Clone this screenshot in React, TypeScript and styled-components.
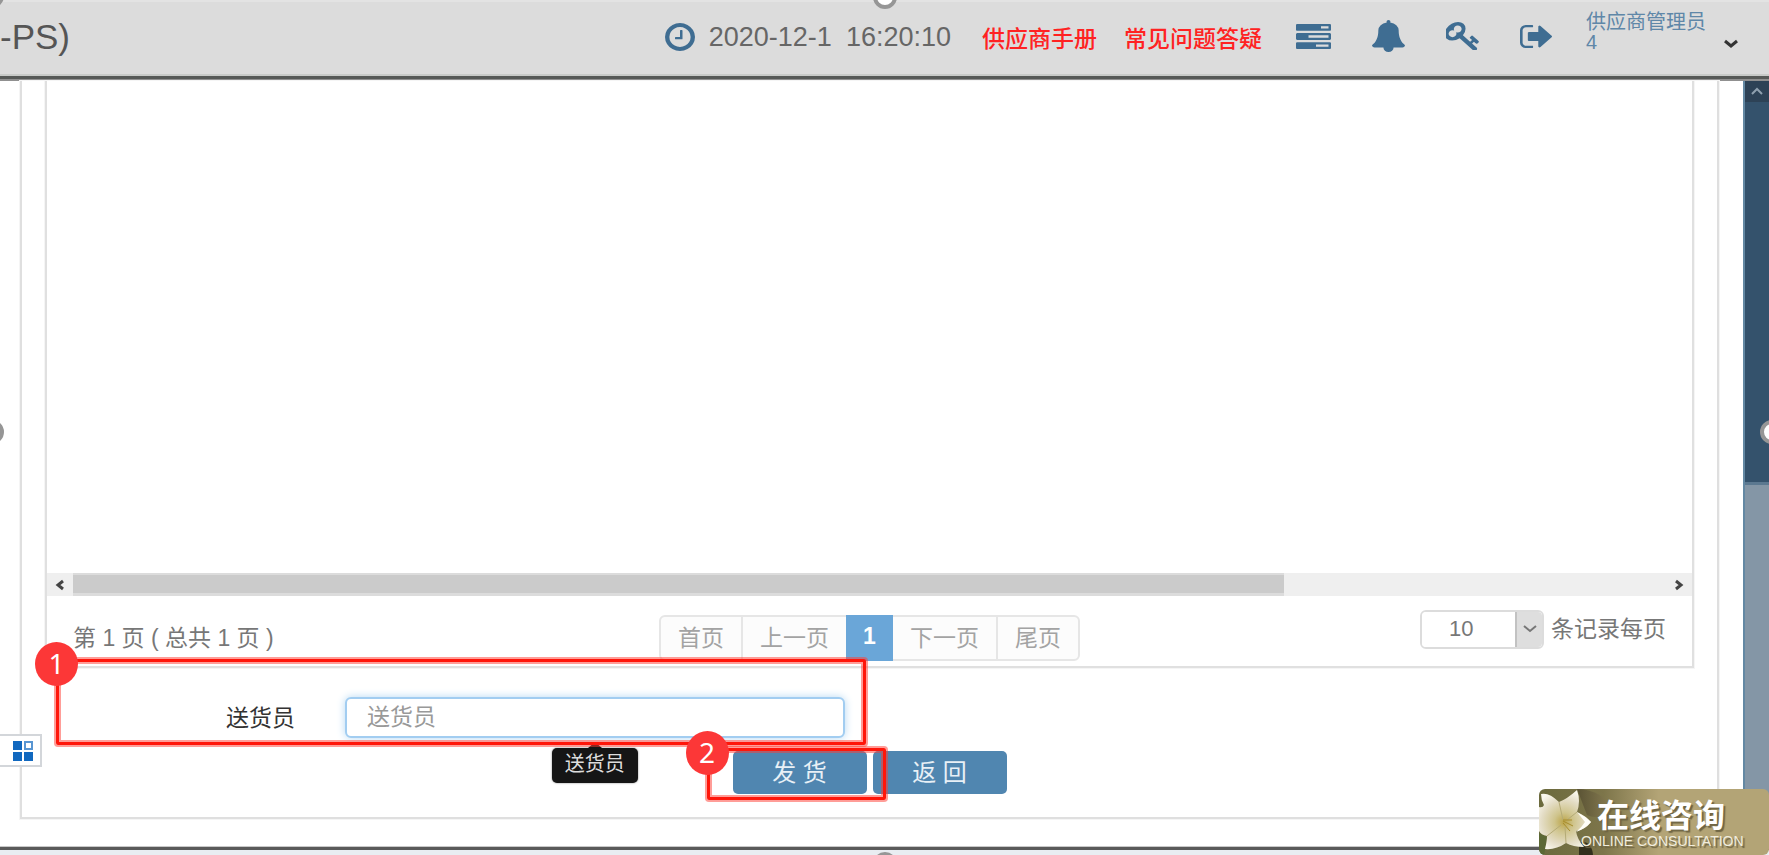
import React from 'react';
import styled, { createGlobalStyle } from 'styled-components';

const GlobalStyle = createGlobalStyle`
  *, *::before, *::after { box-sizing: border-box; }
  body {
    margin: 0;
    background: #fff;
    color: #666;
    font-family: "Liberation Sans", "Noto Sans CJK SC", sans-serif;
    font-size: 23px;
    overflow: hidden;
  }
  button, input, select { font: inherit; }
`;

const blue = '#3f6d92';

const Page = styled.div`
  position: relative;
  display: flex;
  flex-direction: column;
  min-height: 100vh;
  overflow: hidden;
`;

const Header = styled.header`
  display: flex;
  align-items: center;
  height: 81px;
  padding: 0 31px 7px 0;
  background: #dcdcdc;
  box-shadow: inset 0 2px #e3e3e3, inset 0 -2px #909090, inset 0 -5px #565957, inset 0 -7px #c8cac8;
`;

const Title = styled.h1`
  margin: 0;
  font-size: 35px;
  font-weight: 400;
  line-height: 40px;
  color: #555;
`;

const Tools = styled.nav`
  display: flex;
  align-items: center;
  margin-left: auto;
`;

const Clock = styled.time`
  display: flex;
  align-items: center;
  gap: 14px;
  margin-right: 31px;
  font-size: 27px;
  line-height: 32px;
`;

const HelpLinks = styled.div`
  display: flex;
  gap: 27px;
  margin: 4px 34px 0 0;
`;

const HelpLink = styled.a`
  color: #f22;
  font-weight: 500;
  line-height: 32px;
  text-decoration: none;
`;

const IconButton = styled.button<{ $gap: number }>`
  display: flex;
  margin: 0 ${p => p.$gap}px 2px 0;
  padding: 0;
  border: 0;
  background: none;
  color: ${blue};
`;

const UserMenu = styled.button`
  display: flex;
  align-items: flex-end;
  gap: 18px;
  margin: 0 0 10px;
  padding: 0;
  border: 0;
  background: none;
  color: #5f87a8;
  font-size: 20px;
  line-height: 20px;
  text-align: left;
`;

const UserName = styled.span`
  width: 120px;
`;

const Caret = styled.span`
  color: #333;
`;

const Body = styled.div`
  display: flex;
  flex: 1;
`;

const Frame = styled.main`
  display: flex;
  flex: 1;
  flex-direction: column;
  min-width: 0;
  margin: 0 24px 28px 20px;
  padding: 0 23px 23px;
  border: 2px solid #dfdfdf;
  border-top: 0;
  box-shadow: 0 0 0 1px #f5f5f5;
`;

const Grid = styled.section`
  display: flex;
  flex: 1;
  flex-direction: column;
  border: 2px solid #e0e0e0;
  border-top: 0;
  box-shadow: 0 0 0 1px #f5f5f5;
`;

const Rows = styled.div`
  flex: 1;
`;

const HScroll = styled.div`
  display: flex;
  height: 23px;
  background: #efefef;
`;

const HScrollButton = styled.button`
  display: flex;
  align-items: center;
  justify-content: center;
  width: 26px;
  padding: 0;
  border: 0;
  background: none;
  color: #444;
`;

const HScrollTrack = styled.div`
  flex: 1;
`;

const HScrollThumb = styled.div`
  width: 76%;
  height: 100%;
  background: #cbcbcb;
  border: solid #dcdcdc;
  border-width: 2px 0 3px;
`;

const Pager = styled.div`
  display: grid;
  grid-template-columns: 1fr auto 1fr;
  align-items: center;
  height: 70px;
  padding: 0 26px;
`;

const PageInfo = styled.span`
  padding-top: 14px;
  line-height: 30px;
  color: #777;
`;

const PageList = styled.div`
  display: flex;
  margin-top: 13px;
  height: 46px;
  border: 2px solid #e6e6e6;
  border-radius: 6px;
  background: #fcfcfc;
`;

const PageButton = styled.button<{ $active?: boolean }>`
  margin: ${p => (p.$active ? '-2px 0' : '0')};
  padding: 0 17px 3px;
  border: 0;
  background: ${p => (p.$active ? '#6aa6d8' : 'none')};
  color: ${p => (p.$active ? '#fff' : '#a3a3a3')};
  font-weight: ${p => (p.$active ? 700 : 400)};

  & + &:not(:nth-child(3)):not(:nth-child(4)) {
    border-left: 2px solid #e6e6e6;
  }
`;

const PageSize = styled.label`
  display: flex;
  align-items: center;
  justify-self: end;
  gap: 7px;
  line-height: 30px;
  color: #777;
  padding-bottom: 4px;
`;

const SelectBox = styled.span`
  display: grid;
  width: 124px;
  height: 39px;
  overflow: hidden;
  border: 2px solid #dcdcdc;
  border-radius: 6px;
  grid-template-columns: 1fr 27px;
`;

const Select = styled.select`
  grid-column: 1 / 3;
  grid-row: 1;
  appearance: none;
  padding: 0 0 0 27px;
  border: 0;
  background: #fff;
  color: #777;
  font-size: 22px;
`;

const SelectArrow = styled.span`
  grid-column: 2;
  grid-row: 1;
  display: flex;
  align-items: center;
  justify-content: center;
  margin: -2px -2px -2px 0;
  border: 2px solid #c2c2c2;
  background: #dedede;
  color: #777;
  pointer-events: none;
`;

const Field = styled.div`
  position: relative;
  display: flex;
  align-items: center;
  width: 50%;
  padding: 29px 25px 0 0;
`;

const FieldLabel = styled.label`
  width: 250px;
  margin-right: 50px;
  color: #333;
  line-height: 32px;
  text-align: right;
`;

const InputBox = styled.div`
  position: relative;
  flex: 1;
`;

const Input = styled.input`
  display: block;
  width: 100%;
  height: 41px;
  padding: 0 20px 1px;
  border: 2px solid #a2cdf1;
  border-radius: 6px;
  outline: 0;
  box-shadow: 0 0 8px #b5d8f3;
  color: #555;

  &::placeholder { color: #999; opacity: 1; }
`;

const Tooltip = styled.div`
  position: absolute;
  top: 51px;
  left: 50%;
  padding: 1px 13px 4px;
  border-radius: 5px;
  background: #151515;
  box-shadow: 0 0 2px #777;
  color: #ddd;
  font-size: 20px;
  line-height: 30px;
  white-space: nowrap;
  transform: translateX(-50%);

  &::before {
    content: '';
    position: absolute;
    top: -6px;
    left: 50%;
    margin-left: -7px;
    border: solid transparent;
    border-width: 0 7px 6px;
    border-bottom-color: #151515;
  }
`;

const Highlight = styled.div<{ $inset: string }>`
  position: absolute;
  inset: ${p => p.$inset};
  z-index: 2;
  border: 3px solid #ff160a;
  border-radius: 2px;
  box-shadow: 0 0 0 2px rgba(255, 60, 50, 0.5), inset 0 0 0 2px rgba(255, 60, 50, 0.5);
  pointer-events: none;
`;

const Step = styled.span`
  position: absolute;
  top: -20px;
  left: -24px;
  width: 43px;
  height: 44px;
  border-radius: 50%;
  background: #fc3737;
  color: #fff;
  font-family: "Noto Sans", sans-serif;
  font-size: 28px;
  line-height: 43px;
  text-align: center;
`;

const Actions = styled.div`
  display: flex;
  justify-content: center;
  gap: 6px;
  margin-top: 13px;
`;

const ActionSlot = styled.div`
  position: relative;
`;

const ActionButton = styled.button`
  width: 134px;
  height: 43px;
  padding: 0 0 4px;
  border: 0;
  border-radius: 5px;
  background: #5086b0;
  color: #e8f0f6;
  font-size: 24px;
`;

const VScroll = styled.div`
  display: flex;
  flex-direction: column;
  width: 26px;
  border-left: 2px solid #6388a3;
  background: #8496a6;
`;

const VScrollButton = styled.button`
  display: flex;
  align-items: center;
  justify-content: center;
  height: 21px;
  padding: 0;
  border: 0;
  background: #2d4256;
  color: #8fa0af;
`;

const VScrollThumb = styled.div`
  height: 50%;
  border-bottom: 3px solid #5b7890;
  background: #34526c;
`;

const BottomBar = styled.footer`
  height: 8px;
  border-top: 3px solid #5a5a5a;
  background: #e9edf2;
  box-shadow: 0 -1px #c8c8c8;
`;

const SideTab = styled.button`
  position: absolute;
  bottom: 88px;
  left: -2px;
  display: flex;
  align-items: center;
  width: 44px;
  height: 33px;
  padding: 0 0 0 13px;
  border: 2px solid #d3d6da;
  background: #fff;
  color: #1168bf;
`;

const Consult = styled.a`
  position: absolute;
  right: 0;
  bottom: 0;
  width: 230px;
  height: 66px;
  overflow: hidden;
  border-radius: 6px;
  background: linear-gradient(90deg, #6b6a3d 0, #7d754a 28%, #b3a476 52%);
  color: #fff;
  text-decoration: none;
  text-shadow: 2px 2px 1px #6f6544;
`;

const Flower = styled.svg`
  position: absolute;
  top: 0;
  left: 0;
`;

const ConsultText = styled.span`
  position: relative;
  display: flex;
  flex-direction: column;
  padding: 10px 0 0 42px;
  white-space: nowrap;
  color: #fff;
`;

const ConsultTitle = styled.strong`
  padding-left: 16px;
  font-size: 32px;
  font-weight: 700;
  line-height: 34px;
`;

const ConsultSub = styled.span`
  font-size: 14px;
  line-height: 16px;
  color: #f0ecdd;
`;

const Handle = styled.i<{ $x: string; $y: string }>`
  position: absolute;
  z-index: 3;
  left: ${p => p.$x};
  top: ${p => p.$y};
  width: 24px;
  height: 24px;
  margin: -12px 0 0 -12px;
  border: 4px solid #969696;
  border-radius: 50%;
  background: #fff;
`;

const paths = {
  clock: 'M1024 544v448q0 14-9 23t-23 9h-320q-14 0-23-9t-9-23v-64q0-14 9-23t23-9h224v-352q0-14 9-23t23-9h64q14 0 23 9t9 23zm416 352q0-148-73-273t-198-198-273-73-273 73-198 198-73 273 73 273 198 198 273 73 273-73 198-198 73-273zm224 0q0 209-103 385.5t-279.5 279.5-385.5 103-385.5-103-279.5-279.5-103-385.5 103-385.5 279.5-279.5 385.5-103 385.5 103 279.5 279.5 103 385.5z',
  tasks: 'M1024 1408h640v-128h-640v128zm-384-512h1024v-128h-1024v128zm640-512h384v-128h-384v128zm512 832v256q0 26-19 45t-45 19h-1664q-26 0-45-19t-19-45v-256q0-26 19-45t45-19h1664q26 0 45 19t19 45zm0-512v256q0 26-19 45t-45 19h-1664q-26 0-45-19t-19-45v-256q0-26 19-45t45-19h1664q26 0 45 19t19 45zm0-512v256q0 26-19 45t-45 19h-1664q-26 0-45-19t-19-45v-256q0-26 19-45t45-19h1664q26 0 45 19t19 45z',
  bell: 'M1728 1408q0 52-38 90t-90 38h-448q0 106-75 181t-181 75-181-75-75-181h-448q-52 0-90-38t-38-90q50-42 91-88t85-119.5 74.5-158.5 50-206 19.5-260q0-152 117-282.5t307-158.5q-8-19-8-39 0-40 28-68t68-28 68 28 28 68q0 20-8 39 190 28 307 158.5t117 282.5q0 139 19.5 260t50 206 74.5 158.5 85 119.5 91 88z',
  key: 'M832 512q0-80-56-136t-136-56-136 56-56 136q0 42 19 83-41-19-83-19-80 0-136 56t-56 136 56 136 136 56 136-56 56-136q0-42-19-83 41 19 83 19 80 0 136-56t56-136zm851 704q0 17-49 66t-66 49q-9 0-28.5-16t-36.5-33-38.5-40-24.5-26l-96 96 220 220q28 28 28 68 0 42-39 81t-81 39q-40 0-68-28l-671-671q-176 131-365 131-163 0-265.5-102.5t-102.5-265.5q0-160 95-313t248-248 313-95q163 0 265.5 102.5t102.5 265.5q0 189-131 365l355 355 96-96q-3-3-26-24.5t-40-38.5-33-36.5-16-28.5q0-17 49-66t66-49q13 0 23 10 6 6 46 44.5t82 79.5 86.5 86 73 78 28.5 41z',
  signOut: 'M704 1440q0 4 1 20t.5 26.5-3 23.5-10 19.5-20.5 6.5h-320q-119 0-203.5-84.5t-84.5-203.5v-704q0-119 84.5-203.5t203.5-84.5h320q13 0 22.5 9.5t9.5 22.5q0 4 1 20t.5 26.5-3 23.5-10 19.5-20.5 6.5h-320q-66 0-113 47t-47 113v704q0 66 47 113t113 47h312l11.5 1 11.5 3 8 5.5 7 9 2 13.5zm928-544q0 26-19 45l-544 544q-19 19-45 19t-45-19-19-45v-288h-448q-26 0-45-19t-19-45v-384q0-26 19-45t45-19h448v-288q0-26 19-45t45-19 45 19l544 544q19 19 19 45z',
};

type GlyphProps = { d: string; box: string; w: number; h: number; color?: string };

const Glyph = ({ d, box, w, h, color = 'currentColor' }: GlyphProps) => (
  <svg width={w} height={h} viewBox={box} preserveAspectRatio="none" fill={color} aria-hidden="true">
    <path d={d} />
  </svg>
);

const Chevron = ({ d, w, h, stroke = 3 }: { d: string; w: number; h: number; stroke?: number }) => (
  <svg width={w} height={h} viewBox={`0 0 ${w} ${h}`} fill="none" stroke="currentColor" strokeWidth={stroke} aria-hidden="true">
    <path d={d} />
  </svg>
);

export default function App() {
  return (
    <>
      <GlobalStyle />
      <Page>
        <Header>
          <Title>-PS)</Title>
          <Tools>
            <Clock>
              <Glyph d={paths.clock} box="128 128 1536 1536" w={30} h={28} color={blue} />
              <span>2020-12-1</span>
              <span>16:20:10</span>
            </Clock>
            <HelpLinks>
              <HelpLink href="#manual">供应商手册</HelpLink>
              <HelpLink href="#faq">常见问题答疑</HelpLink>
            </HelpLinks>
            <IconButton $gap={41} aria-label="任务">
              <Glyph d={paths.tasks} box="0 128 1792 1408" w={35} h={25} />
            </IconButton>
            <IconButton $gap={41} aria-label="通知">
              <Glyph d={paths.bell} box="64 0 1664 1792" w={33} h={32} />
            </IconButton>
            <IconButton $gap={41} aria-label="密码">
              <Glyph d={paths.key} box="64 128 1620 1540" w={33} h={28} />
            </IconButton>
            <IconButton $gap={34} aria-label="退出">
              <Glyph d={paths.signOut} box="64 256 1568 1280" w={32} h={23} />
            </IconButton>
            <UserMenu>
              <UserName>供应商管理员<br />4</UserName>
              <Caret>
                <Chevron d="M1 2L7 7L13 2" w={14} h={10} />
              </Caret>
            </UserMenu>
          </Tools>
        </Header>

        <Body>
          <Frame>
            <Grid>
              <Rows />
              <HScroll>
                <HScrollButton aria-label="向左滚动"><Chevron d="M8 2L3 6L8 10" w={10} h={12} /></HScrollButton>
                <HScrollTrack><HScrollThumb /></HScrollTrack>
                <HScrollButton aria-label="向右滚动"><Chevron d="M2 2L7 6L2 10" w={10} h={12} /></HScrollButton>
              </HScroll>
              <Pager>
                <PageInfo>第 1 页 ( 总共 1 页 )</PageInfo>
                <PageList>
                  <PageButton>首页</PageButton>
                  <PageButton>上一页</PageButton>
                  <PageButton $active>1</PageButton>
                  <PageButton>下一页</PageButton>
                  <PageButton>尾页</PageButton>
                </PageList>
                <PageSize>
                  <SelectBox>
                    <Select defaultValue="10">
                      <option>10</option>
                      <option>20</option>
                      <option>50</option>
                    </Select>
                    <SelectArrow><Chevron d="M1 2L7 7L13 2" w={14} h={10} stroke={2} /></SelectArrow>
                  </SelectBox>
                  条记录每页
                </PageSize>
              </Pager>
            </Grid>

            <Field>
              <FieldLabel htmlFor="courier">送货员</FieldLabel>
              <InputBox>
                <Input id="courier" placeholder="送货员" />
                <Tooltip role="tooltip">送货员</Tooltip>
              </InputBox>
              <Highlight $inset="-9px 4px -7px 11px"><Step>1</Step></Highlight>
            </Field>

            <Actions>
              <ActionSlot>
                <ActionButton>发 货</ActionButton>
                <Highlight $inset="-3px -19px -6px -26px"><Step>2</Step></Highlight>
              </ActionSlot>
              <ActionButton>返 回</ActionButton>
            </Actions>
          </Frame>

          <VScroll>
            <VScrollButton aria-label="向上滚动"><Chevron d="M1 7L6 2L11 7" w={12} h={9} stroke={2} /></VScrollButton>
            <VScrollThumb />
          </VScroll>
        </Body>
        <BottomBar />

        <SideTab aria-label="应用">
          <svg width="20" height="20" viewBox="0 0 20 20" fill="currentColor" aria-hidden="true">
            <rect width="9" height="9" />
            <rect y="11" width="9" height="9" />
            <rect x="11" y="11" width="9" height="9" />
            <rect x="12" y="1" width="7" height="7" fill="none" stroke="currentColor" strokeWidth="2" opacity=".7" />
          </svg>
        </SideTab>

        <Consult href="#consult">
          <Flower width="100" height="67" viewBox="0 0 100 67" aria-hidden="true">
            <defs>
              <radialGradient id="petal" cx="25" cy="33" r="32" gradientUnits="userSpaceOnUse">
                <stop offset="0" stopColor="#bba448" />
                <stop offset=".3" stopColor="#cfc48c" />
                <stop offset=".7" stopColor="#e4ddc6" />
                <stop offset="1" stopColor="#faf8ee" />
              </radialGradient>
              <linearGradient id="leaf" x1="0" x2="1">
                <stop offset="0" stopColor="#5a5334" />
                <stop offset="1" stopColor="#8a7f54" />
              </linearGradient>
            </defs>
            <path d="M38 0C54 0 68 8 74 20C66 28 56 30 48 26Z" fill="url(#leaf)" />
            <path d="M40 54C46 50 54 56 54 67H40Z" fill="#33301d" />
            <path d="M0 44L8 48L5 67H0Z" fill="#5c6835" />
            <path d="M2 5Q10 3 20 13Q28 10 38 1Q42 12 38 23Q47 27 52 33Q46 41 37 42Q38 50 45 58Q34 58 27 54Q17 61 6 60Q8 52 8 47Q2 46 0 42V18Q4 19 5 16Q2 11 2 5Z" fill="url(#petal)" />
            <path d="M20 13Q22 22 24 31M38 23L28 31M8 47L22 36M27 54L26 38" fill="none" stroke="#b5ab76" strokeWidth="1" />
            <path d="M38 23Q46 27 52 33Q46 40 37 43Q43 38 46 33Q42 28 38 23Z" fill="#fffef8" />
            <path d="M24 32L34 37M24 34L31 42M24 31L33 31" stroke="#a88d2e" strokeWidth="1" />
          </Flower>
          <ConsultText>
            <ConsultTitle>在线咨询</ConsultTitle>
            <ConsultSub>ONLINE CONSULTATION</ConsultSub>
          </ConsultText>
        </Consult>

        <Handle $x="-8px" $y="-4px" />
        <Handle $x="50%" $y="-3px" />
        <Handle $x="-8px" $y="432px" />
        <Handle $x="calc(100% + 3px)" $y="432px" />
        <Handle $x="50%" $y="calc(100% + 9px)" />
      </Page>
    </>
  );
}
